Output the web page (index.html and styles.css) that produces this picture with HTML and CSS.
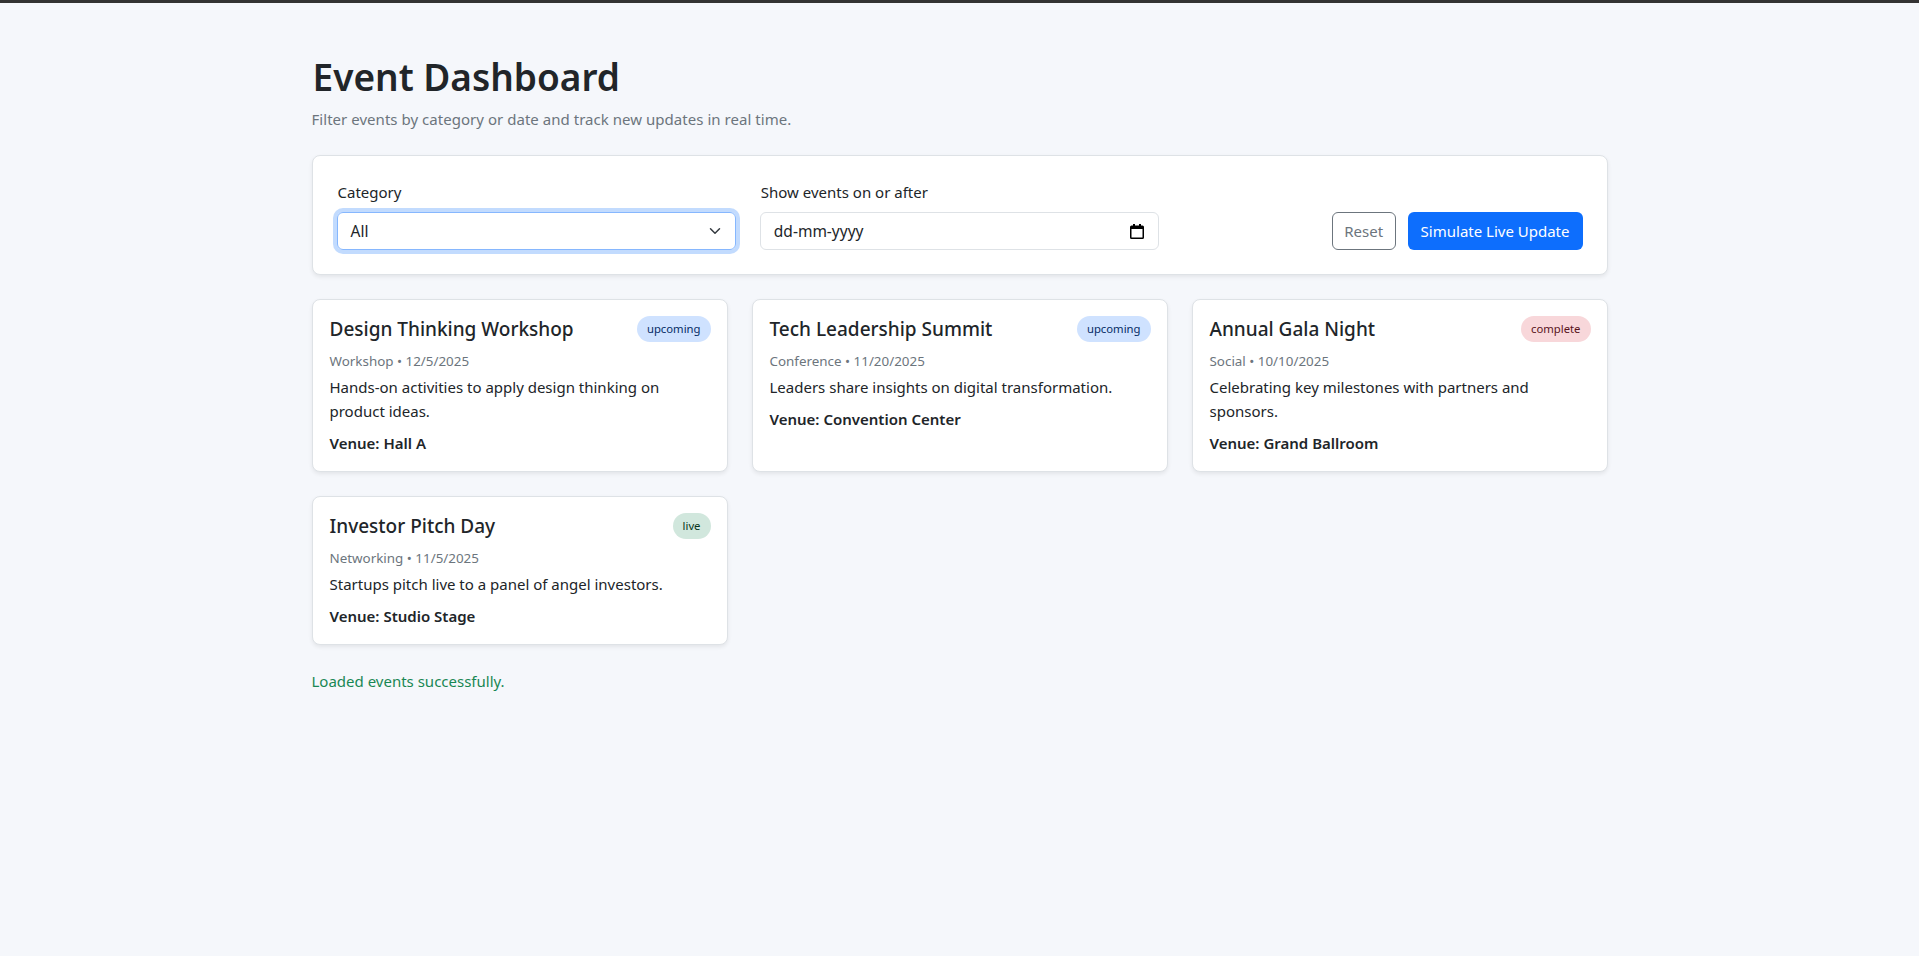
FILE: index.html
```html
<!DOCTYPE html>
<html lang="en">

<head>
    <meta charset="UTF-8">
    <meta name="viewport" content="width=device-width, initial-scale=1.0">
    <title>Event Dashboard</title>
    <link rel="stylesheet" href="styles.css">
</head>

<body>

    <div class="container">
        <h1>Event Dashboard</h1>
        <p class="subtitle">Filter events by category or date and track new updates in real time.</p>

        <div class="panel">
            <div class="field">
                <label for="category">Category</label>
                <div class="control focused" id="category">
                    <span>All</span>
                    <svg class="chevron" width="12" height="12" viewBox="0 0 16 16">
                        <path d="M2 5l6 6 6-6" fill="none" stroke="#343a40" stroke-width="2" stroke-linecap="round" stroke-linejoin="round" />
                    </svg>
                </div>
            </div>
            <div class="field">
                <label for="date">Show events on or after</label>
                <div class="control" id="date">
                    <span>dd-mm-yyyy</span>
                    <svg class="calendar" width="14" height="15" viewBox="0 0 14 15">
                        <path d="M3 0h2v1.500h4V0h2v1.500h1.500A1.500 1.500 0 0 1 14 3v10.500a1.500 1.500 0 0 1-1.500 1.500h-11A1.500 1.500 0 0 1 0 13.500V3a1.500 1.500 0 0 1 1.500-1.500H3zM1.500 5v8.500h11V5z" fill="#000" />
                    </svg>
                </div>
            </div>
            <div class="actions">
                <button class="btn btn-reset">Reset</button>
                <button class="btn btn-live">Simulate Live Update</button>
            </div>
        </div>

        <div class="events">
            <div class="event">
                <div class="event-head">
                    <h5>Design Thinking Workshop</h5>
                    <span class="badge upcoming">upcoming</span>
                </div>
                <div class="meta">Workshop • 12/5/2025</div>
                <p class="desc">Hands-on activities to apply design thinking on product ideas.</p>
                <div class="venue">Venue: Hall A</div>
            </div>
            <div class="event">
                <div class="event-head">
                    <h5>Tech Leadership Summit</h5>
                    <span class="badge upcoming">upcoming</span>
                </div>
                <div class="meta">Conference • 11/20/2025</div>
                <p class="desc">Leaders share insights on digital transformation.</p>
                <div class="venue">Venue: Convention Center</div>
            </div>
            <div class="event">
                <div class="event-head">
                    <h5>Annual Gala Night</h5>
                    <span class="badge complete">complete</span>
                </div>
                <div class="meta">Social • 10/10/2025</div>
                <p class="desc">Celebrating key milestones with partners and sponsors.</p>
                <div class="venue">Venue: Grand Ballroom</div>
            </div>
            <div class="event">
                <div class="event-head">
                    <h5>Investor Pitch Day</h5>
                    <span class="badge live">live</span>
                </div>
                <div class="meta">Networking • 11/5/2025</div>
                <p class="desc">Startups pitch live to a panel of angel investors.</p>
                <div class="venue">Venue: Studio Stage</div>
            </div>
        </div>

        <div class="status">Loaded events successfully.</div>
    </div>

</body>

</html>
```

FILE: styles.css
```css
* {
    box-sizing: border-box;
}

body {
    margin: 0;
    min-height: 956px;
    background-color: #f5f7fb;
    border-top: 3px solid #333;
    color: #212529;
    font-family: "Noto Sans", Arial, sans-serif;
    font-size: 15px;
    line-height: 24px;
}

.container {
    width: 1296px;
    margin: 0 auto;
    padding-top: 50px;
}

h1 {
    margin: 0 0 6px 1px;
    font-size: 37px;
    font-weight: 600;
    line-height: 48px;
}

.subtitle {
    margin: 0 0 24px;
    color: #6c757d;
    letter-spacing: 0.035px;
}

.panel {
    display: grid;
    grid-template-columns: repeat(3, 1fr);
    gap: 24px;
    padding: 24px;
    background-color: #fff;
    border: 1px solid #dee2e6;
    border-radius: 8px;
    box-shadow: 0 2px 4px rgba(0, 0, 0, 0.075);
}

.field label {
    display: block;
    margin-bottom: 8px;
    padding-left: 1px;
}

.control {
    display: flex;
    justify-content: space-between;
    align-items: center;
    height: 38px;
    padding: 0 12px 0 13px;
    border: 1px solid #dee2e6;
    border-radius: 6px;
    font-size: 15.5px;
}

.control.focused {
    border-color: #86b7fe;
    box-shadow: 0 0 0 4px rgba(13, 110, 253, 0.25);
}

.chevron {
    margin-right: 2px;
}

.calendar {
    margin-right: 2px;
}

.actions {
    display: flex;
    justify-content: flex-end;
    align-items: flex-end;
    gap: 12px;
}

.btn {
    height: 38px;
    padding: 0 12px;
    border: 1px solid transparent;
    border-radius: 6px;
    font-family: inherit;
    font-size: 15px;
}

.btn-reset {
    padding: 0 11.5px;
    background-color: #fff;
    border-color: #6c757d;
    color: #6c757d;
}

.btn-live {
    background-color: #0d6efd;
    color: #fff;
}

.events {
    display: grid;
    grid-template-columns: repeat(3, 1fr);
    gap: 24px;
    margin-top: 24px;
}

.event {
    padding: 16px 16px 16px 17px;
    background-color: #fff;
    border: 1px solid #dee2e6;
    border-radius: 8px;
    box-shadow: 0 2px 4px rgba(0, 0, 0, 0.075);
}

.event-head {
    display: flex;
    justify-content: space-between;
    align-items: flex-start;
    margin-bottom: 8px;
}

h5 {
    margin: 0;
    font-size: 19px;
    font-weight: 500;
    line-height: 26px;
}

.badge {
    padding: 3px 10px;
    border-radius: 999px;
    font-size: 11.3px;
    line-height: 20px;
}

.upcoming {
    background-color: #cfe2ff;
    color: #052c65;
}

.complete {
    background-color: #f8d7da;
    color: #58151c;
}

.live {
    background-color: #d1e7dd;
    color: #0a3622;
}

.meta {
    margin-bottom: 3px;
    padding-top: 1px;
    color: #6c757d;
    font-size: 13.4px;
    line-height: 21px;
}

.desc {
    margin: 0 0 8px;
}

.venue {
    font-weight: 600;
}

.status {
    margin-top: 24px;
    color: #198754;
}
```
